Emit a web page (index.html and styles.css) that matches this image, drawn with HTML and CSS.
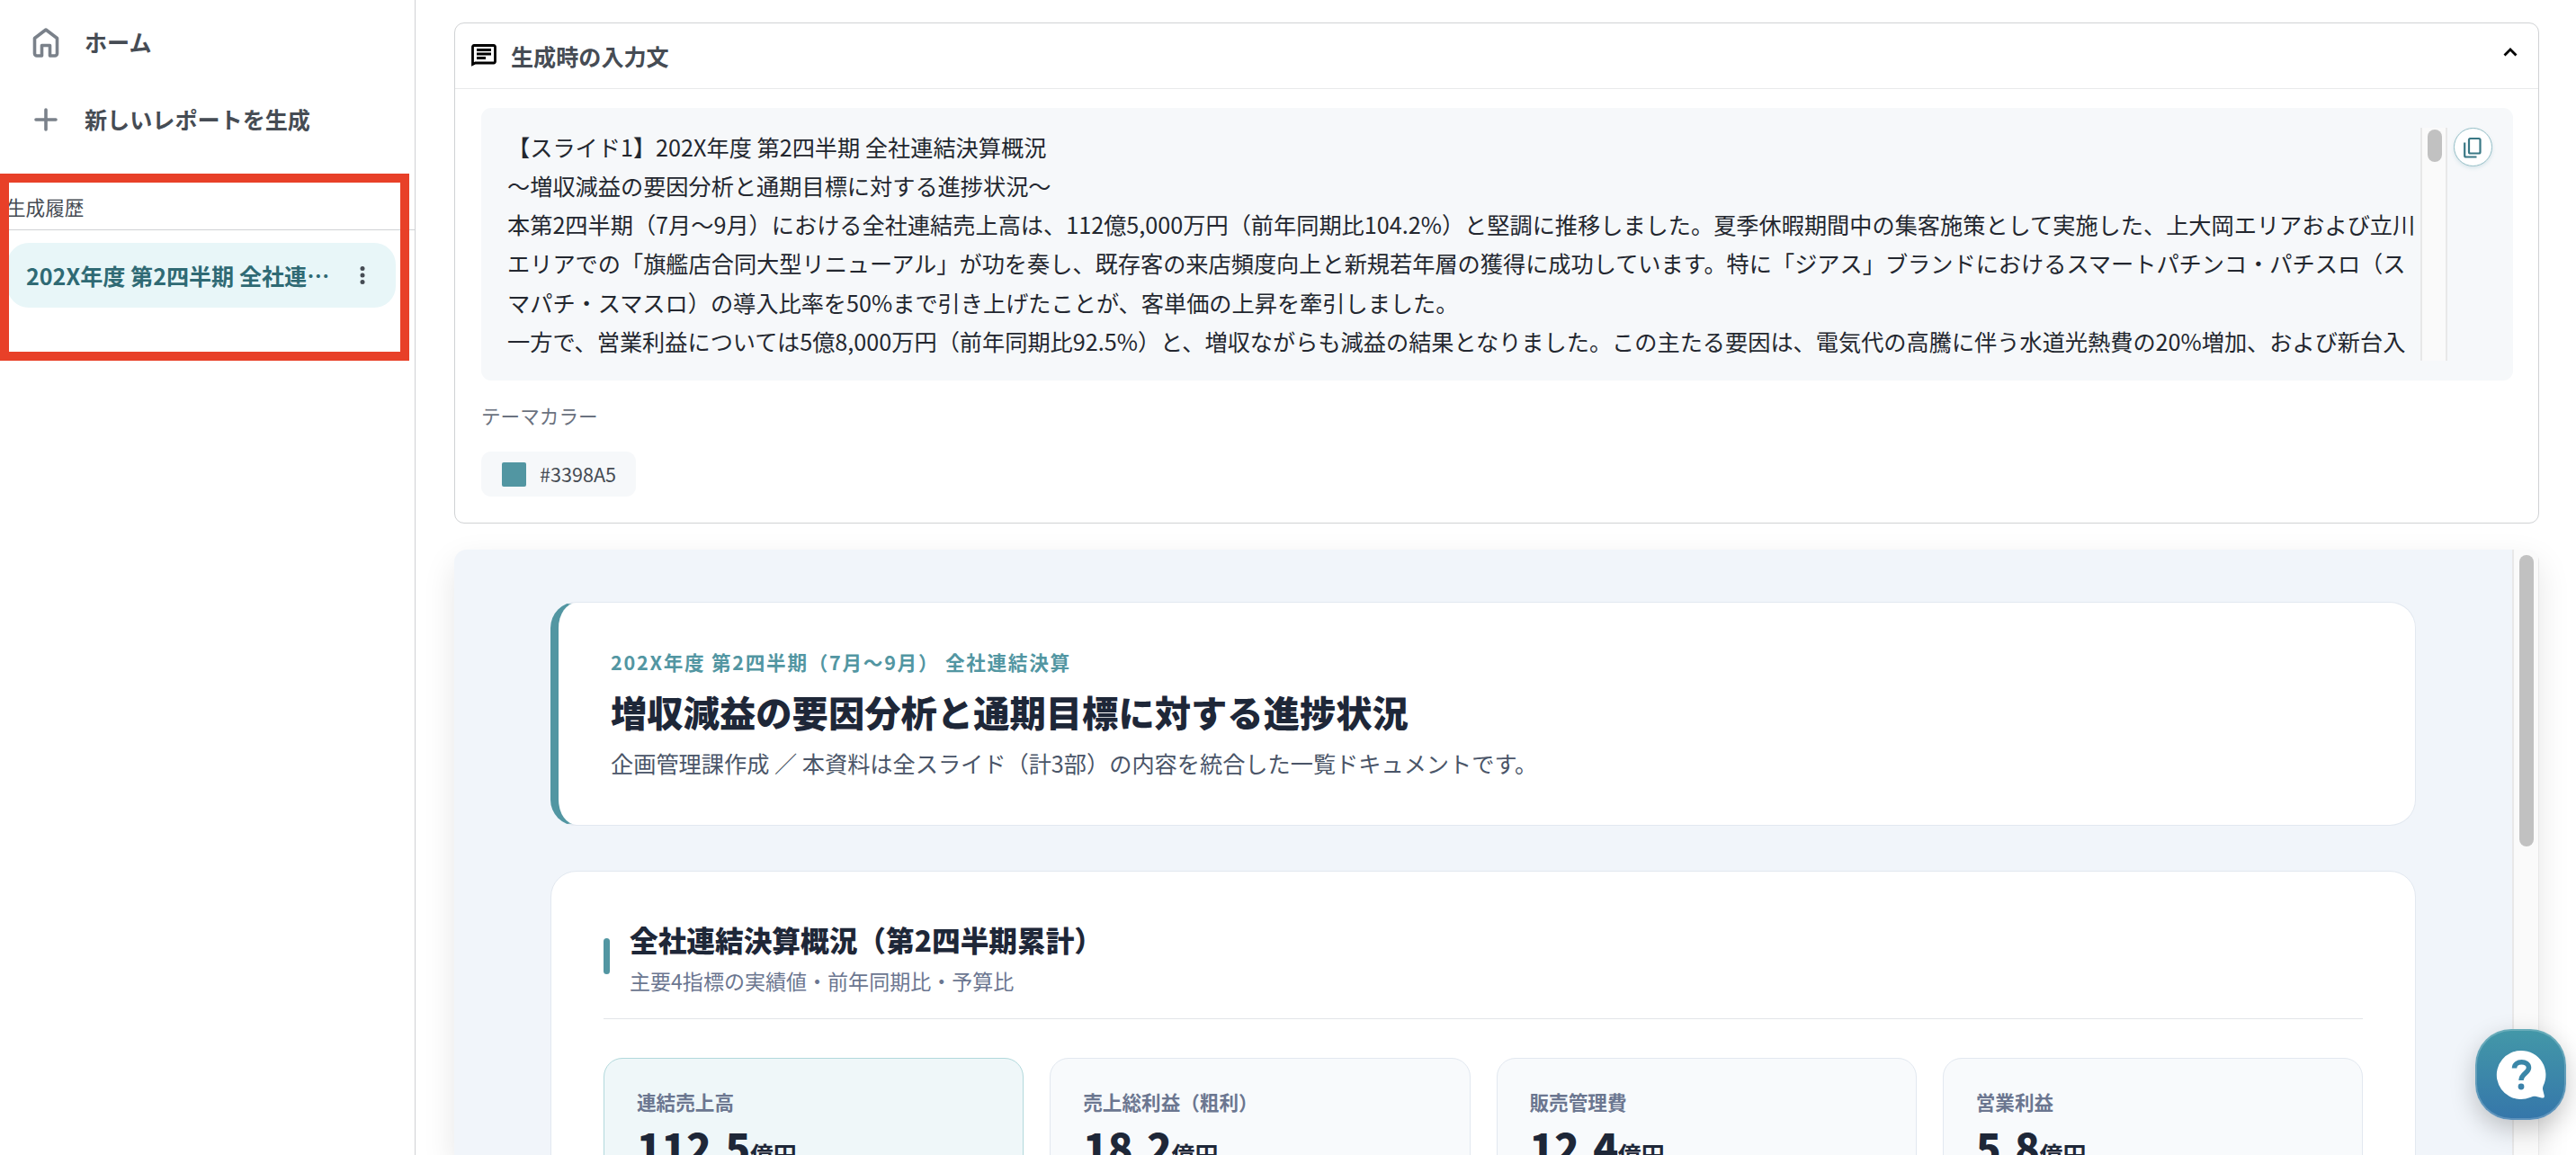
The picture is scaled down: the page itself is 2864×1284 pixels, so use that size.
FILE: index.html
```html
<!DOCTYPE html>
<html lang="ja">
<head>
<meta charset="utf-8">
<title>レポート</title>
<link rel="stylesheet" href="styles.css">
</head>
<body>
<div class="app">
  <aside class="sidebar">
    <nav class="nav">
      <a class="nav-item">
        <svg class="nav-icon" viewBox="0 0 36 36"><path d="M5.500 13.500 18 4l12.500 9.500V30.500a2.500 2.500 0 0 1-2.500 2.500H22.500V21.500h-9V33H8a2.500 2.500 0 0 1-2.500-2.500z"/></svg>
        <span>ホーム</span>
      </a>
      <a class="nav-item">
        <svg class="nav-icon" viewBox="0 0 36 36"><path d="M18 7v22M7 18h22"/></svg>
        <span>新しいレポートを生成</span>
      </a>
    </nav>
    <h2 class="history-title">生成履歴</h2>
    <div class="history-item">
      <span class="history-name">202X年度 第2四半期 全社連<span class="dots">…</span></span>
      <svg class="more" viewBox="0 0 6 20"><circle cx="3" cy="2.600" r="2.500"/><circle cx="3" cy="10" r="2.500"/><circle cx="3" cy="17.400" r="2.500"/></svg>
    </div>
    <div class="highlight"></div>
  </aside>

  <main class="main">
    <section class="input-card">
      <header class="input-head">
        <svg class="chat" viewBox="0 0 28 26"><path d="M1.500 22.500V3A1.500 1.500 0 0 1 3 1.500H25A1.500 1.500 0 0 1 26.500 3V19.500a1.500 1.500 0 0 1-1.500 1.500H4.500z"/><path d="M6 6.500h16M6 11h16M6 15.500h10"/></svg>
        <h2>生成時の入力文</h2>
        <svg class="chevron" viewBox="0 0 16 10"><path d="M1.500 8.500 8 2l6.500 6.500"/></svg>
      </header>
      <div class="input-body">
        <div class="prompt">
          <div class="prompt-text">【スライド1】202X年度 第2四半期 全社連結決算概況<br>〜増収減益の要因分析と通期目標に対する進捗状況〜<br>本第2四半期（7月〜9月）における全社連結売上高は、112億5,000万円（前年同期比104.2%）と堅調に推移しました。夏季休暇期間中の集客施策として実施した、上大岡エリアおよび立川<br>エリアでの「旗艦店合同大型リニューアル」が功を奏し、既存客の来店頻度向上と新規若年層の獲得に成功しています。特に「ジアス」ブランドにおけるスマートパチンコ・パチスロ（ス<br>マパチ・スマスロ）の導入比率を50%まで引き上げたことが、客単価の上昇を牽引しました。<br>一方で、営業利益については5億8,000万円（前年同期比92.5%）と、増収ながらも減益の結果となりました。この主たる要因は、電気代の高騰に伴う水道光熱費の20%増加、および新台入</div>
          <div class="track"><div class="thumb thumb-short"></div></div>
          <button class="copy">
            <svg viewBox="0 0 20 24"><path d="M6.500 2h10.500a1.500 1.500 0 0 1 1.500 1.500V17a1.500 1.500 0 0 1-1.500 1.500H7.500A1.500 1.500 0 0 1 6 17V3.500A1.500 1.500 0 0 1 7.500 2z"/><path d="M1.200 6.500V21a1.500 1.500 0 0 0 1.500 1.500H14.500"/></svg>
          </button>
        </div>
        <p class="theme-label">テーマカラー</p>
        <div class="theme-chip"><i class="swatch"></i><span>#3398A5</span></div>
      </div>
    </section>

    <section class="report">
      <div class="report-page">
        <article class="hero">
          <p class="eyebrow">202X年度 第2四半期（7月〜9月） 全社連結決算</p>
          <h1>増収減益の要因分析と通期目標に対する進捗状況</h1>
          <p class="lead">企画管理課作成 ／ 本資料は全スライド（計3部）の内容を統合した一覧ドキュメントです。</p>
        </article>
        <article class="panel">
          <header class="panel-head">
            <i class="accent"></i>
            <div>
              <h2>全社連結決算概況（第2四半期累計）</h2>
              <p>主要4指標の実績値・前年同期比・予算比</p>
            </div>
          </header>
          <div class="kpis">
            <div class="kpi kpi-main"><p class="kpi-label">連結売上高</p><p class="kpi-value">112.5<small>億円</small></p></div>
            <div class="kpi"><p class="kpi-label">売上総利益（粗利）</p><p class="kpi-value">18.2<small>億円</small></p></div>
            <div class="kpi"><p class="kpi-label">販売管理費</p><p class="kpi-value">12.4<small>億円</small></p></div>
            <div class="kpi"><p class="kpi-label">営業利益</p><p class="kpi-value">5.8<small>億円</small></p></div>
          </div>
        </article>
      </div>
      <div class="track report-track"><div class="thumb thumb-long"></div></div>
    </section>
  </main>

  <button class="help">
    <svg viewBox="0 0 56 56"><path class="bubble" d="M28 1a27 27 0 1 0 10 52c3-1.300 5-1.600 7-1l6 1.500c2 .4 3.300-.8 2.700-2.700l-1.500-6c-.4-1.800-.2-3 .5-5A27 27 0 0 0 28 1z"/><path class="mark" d="M20.500 20.500c0-9 16-9 16-.5 0 6-8.500 6.500-8.500 14"/><circle class="dot" cx="28" cy="41" r="3.400"/></svg>
  </button>
</div>
</body>
</html>
```
FILE: styles.css
```css
* { box-sizing: border-box; }

body {
  margin: 0;
  background: #fff;
  color: #23272f;
  font-family: "Noto Sans CJK JP", sans-serif;
}

h1, h2, p { margin: 0; }

button { padding: 0; }

.app {
  display: flex;
  position: relative;
  width: 2864px;
  height: 1284px;
  overflow: hidden;
}

/* Sidebar */
.sidebar {
  position: relative;
  flex: none;
  width: 462px;
  padding-top: 4px;
  border-right: 1px solid #d0d2d4;
}

.nav-item {
  display: flex;
  align-items: center;
  gap: 25px;
  height: 86px;
  padding-left: 33px;
  font-size: 25.100px;
  font-weight: 700;
  color: #464c54;
}

.nav-item span { padding-bottom: 2px; }

.nav-icon {
  width: 36px;
  height: 36px;
  fill: none;
  stroke: #7a818a;
  stroke-width: 3.600;
  stroke-linecap: round;
  stroke-linejoin: round;
}

.history-title {
  height: 80px;
  padding: 38px 0 0 7px;
  border-bottom: 1px solid #d0d2d4;
  font-size: 21.600px;
  font-weight: 400;
  line-height: 32px;
  color: #464c54;
}

.history-item {
  display: flex;
  align-items: center;
  justify-content: space-between;
  height: 72px;
  margin: 14px 21px 0 8px;
  padding: 0 34px 0 21px;
  border-radius: 24px;
  background: #e8f6f8;
  font-size: 25.100px;
  font-weight: 700;
  color: #2f6a74;
}

.more { width: 6px; height: 20px; fill: #464c54; }

.highlight {
  position: absolute;
  left: 0;
  top: 193px;
  width: 455px;
  height: 208px;
  border: 10px solid #e84028;
}

/* Main column */
.main {
  flex: 1;
  display: flex;
  flex-direction: column;
  gap: 29px;
  padding: 25px 41px 0 43px;
}

.input-card {
  flex: none;
  height: 557px;
  border: 1px solid #d0d2d4;
  border-radius: 11px;
}

.input-head {
  display: flex;
  align-items: center;
  height: 73px;
  padding: 0 23px 0 18px;
  border-bottom: 1px solid #e8e9ea;
}

.input-head h2 {
  flex: 1;
  margin: -1px 0 0 16px;
  font-size: 25.100px;
  line-height: 36px;
  color: #464c54;
}

.chat { width: 28px; height: 26px; fill: none; stroke: #000; stroke-width: 2.800; }
.chevron { width: 16px; height: 10px; margin-top: -8px; fill: none; stroke: #000; stroke-width: 2.800; }

.input-body { padding: 21px 28px 0 29px; }

.prompt {
  display: flex;
  height: 303px;
  padding: 22px 23px 22px 29px;
  border-radius: 11px;
  background: #f6f8fa;
}

.prompt-text {
  flex: 1;
  min-width: 0;
  font-size: 25.190px;
  line-height: 43.150px;
  white-space: nowrap;
}

.track {
  flex: none;
  width: 30px;
  padding: 2px 4px 0 6px;
  border: solid #e8e8e8;
  border-width: 0 2px;
  background: #fafafa;
}

.thumb { width: 16px; border-radius: 8px; background: #c1c1c1; }
.thumb-short { height: 36px; }
.thumb-long { height: 324px; }

.copy {
  flex: none;
  display: flex;
  align-items: center;
  justify-content: center;
  width: 43px;
  height: 43px;
  margin-left: 7px;
  border: 1px solid #95bfc7;
  border-radius: 50%;
  background: #fff;
  box-shadow: 0 2px 4px rgba(50, 130, 145, .15);
}

.copy svg { width: 20px; height: 24px; margin-right: 1px; fill: none; stroke: #3a7885; stroke-width: 2.200; }

.theme-label {
  margin-top: 23px;
  font-size: 21.600px;
  line-height: 32px;
  color: #6b7280;
}

.theme-chip {
  display: inline-flex;
  align-items: center;
  gap: 15px;
  width: 172px;
  height: 50px;
  margin-top: 24px;
  padding-left: 23px;
  border-radius: 11px;
  background: #f6f8fa;
  font-size: 21.600px;
  color: #464c54;
}

.theme-chip span { padding-bottom: 1px; }

.swatch { width: 27px; height: 27px; border-radius: 2px; background: #5296a2; }

/* Report preview */
.report {
  flex: 1;
  display: flex;
  min-height: 0;
  border-radius: 14px 14px 0 0;
  background: #f1f5fa;
  box-shadow: 0 14px 36px rgba(0, 0, 0, .1);
  overflow: hidden;
}

.report-track { border-right-width: 1px; padding: 6px 5px 0 6px; }

.report-page {
  flex: 1;
  display: flex;
  flex-direction: column;
  gap: 50px;
  padding: 58px 107px 0;
}

.hero {
  flex: none;
  height: 249px;
  padding: 48px 57px 0 58px;
  border: 1px solid #e2e8f0;
  border-left: 9px solid #5296a2;
  border-radius: 29px;
  background: #fff;
}

.eyebrow {
  font-size: 21.600px;
  font-weight: 700;
  line-height: 36px;
  letter-spacing: .08em;
  color: #5296a2;
}

.hero h1 {
  margin-top: 9px;
  font-size: 40.320px;
  font-weight: 900;
  line-height: 56px;
  color: #1e2738;
}

.lead { margin-top: 10px; font-size: 25.200px; line-height: 38px; color: #4a5568; }

.panel {
  flex: none;
  height: 500px;
  padding: 50px 58px 0;
  border: 1px solid #e2e8f0;
  border-radius: 29px;
  background: #fff;
}

.panel-head {
  display: flex;
  align-items: center;
  gap: 22px;
  height: 114px;
  padding-bottom: 25px;
  border-bottom: 1px solid #e2e5e9;
}

.panel-head div { padding-top: 3px; }

.accent { width: 7px; height: 40px; border-radius: 4px; background: #5296a2; }

.panel-head h2 { font-size: 31.680px; font-weight: 900; line-height: 50px; color: #1e2738; }
.panel-head p { font-size: 23.040px; line-height: 42px; color: #6b7690; }

.kpis {
  display: grid;
  grid-template-columns: repeat(4, 1fr);
  gap: 29px;
  margin-top: 43px;
}

.kpi {
  height: 260px;
  padding: 32px 36px;
  border: 1px solid #e2e8f0;
  border-radius: 21px;
  background: #f8fafc;
}

.kpi-main { border-color: #b2d9dc; background: #eff7f9; }

.kpi-label { font-size: 21.600px; font-weight: 700; line-height: 32px; color: #6b7690; }

.kpi-value {
  margin-top: 2px;
  font-size: 46.080px;
  font-weight: 900;
  line-height: 62px;
  letter-spacing: -.5px;
  color: #1e2738;
}
.kpi-value small { font-size: 25.920px; font-weight: 700; letter-spacing: 0; }

/* Floating help button */
.help {
  position: absolute;
  left: 2752px;
  top: 1144px;
  display: flex;
  align-items: center;
  justify-content: center;
  width: 101px;
  height: 101px;
  border: 2px solid rgba(255, 255, 255, .2);
  border-radius: 40px;
  background: linear-gradient(#4398a8, #3576aa) border-box;
  box-shadow: 0 10px 28px rgba(0, 0, 0, .22);
}

.help svg { width: 56px; height: 56px; }
.bubble { fill: #fff; }
.mark { fill: none; stroke: #3b87a8; stroke-width: 5.500; stroke-linecap: butt; }
.dot { fill: #3b82aa; }
```
